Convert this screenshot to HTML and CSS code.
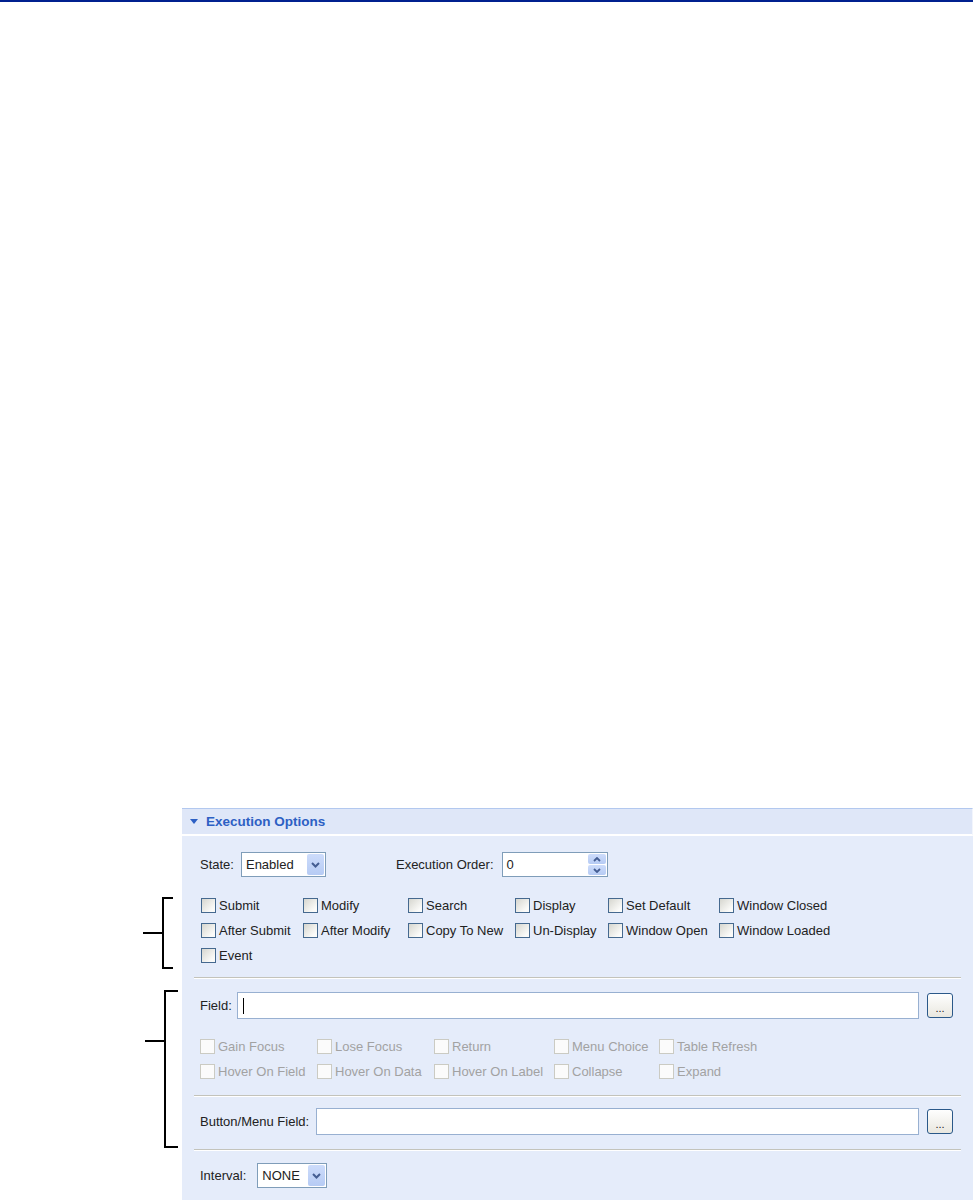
FILE: index.html
```html
<!DOCTYPE html>
<html lang="en">
<head>
    <meta charset="UTF-8">
    <title>Execution Options</title>
    <link rel="stylesheet" href="styles.css">
</head>
<body>
    <div class="topbar"></div>
    <div class="page">
        <div class="gutter"></div>
        <div class="panel-head"><span class="tri"></span>Execution Options</div>

        <div class="gutter"></div>
        <div class="sect state-row">
            <span class="lbl">State:</span>
            <div class="select w-state">
                <span class="val">Enabled</span>
                <span class="drop"><svg width="9" height="6" viewBox="0 0 9 6"><path d="M1 1 L4.5 4.5 L8 1" fill="none" stroke="#445d92" stroke-width="2"/></svg></span>
            </div>
            <span class="lbl order-lbl">Execution Order:</span>
            <div class="spinner">
                <span class="val">0</span>
                <span class="spin">
                    <span class="arrow"><svg width="8" height="5" viewBox="0 0 8 5"><path d="M1 4 L4 1 L7 4" fill="none" stroke="#445d92" stroke-width="1.8"/></svg></span>
                    <span class="arrow"><svg width="8" height="5" viewBox="0 0 8 5"><path d="M1 1 L4 4 L7 1" fill="none" stroke="#445d92" stroke-width="1.8"/></svg></span>
                </span>
            </div>
        </div>

        <div class="gutter"><div class="bracket b1"></div></div>
        <div class="sect events">
            <div class="checks">
                <label class="check"><span class="box"></span>Submit</label>
                <label class="check"><span class="box"></span>Modify</label>
                <label class="check"><span class="box"></span>Search</label>
                <label class="check"><span class="box"></span>Display</label>
                <label class="check"><span class="box"></span>Set Default</label>
                <label class="check"><span class="box"></span>Window Closed</label>
                <label class="check"><span class="box"></span>After Submit</label>
                <label class="check"><span class="box"></span>After Modify</label>
                <label class="check"><span class="box"></span>Copy To New</label>
                <label class="check"><span class="box"></span>Un-Display</label>
                <label class="check"><span class="box"></span>Window Open</label>
                <label class="check"><span class="box"></span>Window Loaded</label>
                <label class="check"><span class="box"></span>Event</label>
            </div>
            <div class="sep sep-events"></div>
        </div>

        <div class="gutter span2"><div class="bracket b2"></div></div>
        <div class="sect field-sect">
            <div class="field-row">
                <span class="lbl">Field:</span>
                <div class="input field-input"><span class="caret"></span></div>
                <button class="dots" type="button">...</button>
            </div>
            <div class="checks disabled">
                <label class="check"><span class="box"></span>Gain Focus</label>
                <label class="check"><span class="box"></span>Lose Focus</label>
                <label class="check"><span class="box"></span>Return</label>
                <label class="check"><span class="box"></span>Menu Choice</label>
                <label class="check"><span class="box"></span>Table Refresh</label>
                <label class="check"><span class="box"></span>Hover On Field</label>
                <label class="check"><span class="box"></span>Hover On Data</label>
                <label class="check"><span class="box"></span>Hover On Label</label>
                <label class="check"><span class="box"></span>Collapse</label>
                <label class="check"><span class="box"></span>Expand</label>
            </div>
            <div class="sep sep-field"></div>
        </div>
        <div class="sect button-sect">
            <div class="field-row">
                <span class="lbl">Button/Menu Field:</span>
                <div class="input"></div>
                <button class="dots" type="button">...</button>
            </div>
            <div class="sep sep-button"></div>
        </div>

        <div class="gutter"></div>
        <div class="sect interval-sect">
            <span class="lbl">Interval:</span>
            <div class="select w-interval">
                <span class="val">NONE</span>
                <span class="drop"><svg width="9" height="6" viewBox="0 0 9 6"><path d="M1 1 L4.5 4.5 L8 1" fill="none" stroke="#445d92" stroke-width="2"/></svg></span>
            </div>
        </div>
    </div>
</body>
</html>
```

FILE: styles.css
```css
body {
    margin: 0;
    font-family: "Liberation Sans", Arial, sans-serif;
    font-size: 13px;
    color: #222;
    background: #fff;
}
.topbar {
    height: 2px;
    background: #00208f;
}
.page {
    display: grid;
    grid-template-columns: 182px 791px;
    margin-top: 806px;
}
.gutter { grid-column: 1; }
.gutter.span2 { grid-row: span 2; }

/* panel header */
.panel-head {
    grid-column: 2;
    height: 25px;
    border-top: 1px solid #b2c8ef;
    border-bottom: 2px solid #fff;
    border-right: 1px solid #f2f5fc;
    background: #dfe7f8;
    display: flex;
    align-items: center;
    gap: 8px;
    padding-left: 8px;
    font-size: 13.5px;
    font-weight: bold;
    color: #2d60c4;
}
.tri {
    width: 0;
    height: 0;
    border-left: 4px solid transparent;
    border-right: 4px solid transparent;
    border-top: 5px solid #2d60c4;
}

.sect {
    grid-column: 2;
    background: #e5ecfa;
}
.lbl { white-space: nowrap; }

/* state row */
.state-row {
    display: flex;
    align-items: center;
    padding: 16px 0 16px 18px;
}
.state-row .select { margin-left: 7px; }
.order-lbl { margin-left: 70px; }
.select, .spinner {
    display: flex;
    align-items: center;
    height: 25px;
    box-sizing: border-box;
    border: 1px solid #7f9db9;
    background: #fff;
}
.select .val, .spinner .val {
    flex: 1;
    padding-left: 4px;
}
.w-state { width: 85px; }
.w-interval { width: 70px; }
.select .drop {
    align-self: stretch;
    width: 17px;
    margin: 1px;
    border-radius: 2px;
    background: linear-gradient(#cddcfb, #b6cbf4);
    display: flex;
    align-items: center;
    justify-content: center;
}
.spinner {
    width: 106px;
    margin-left: 8px;
}
.spin {
    align-self: stretch;
    width: 18px;
    margin: 1px;
    display: flex;
    flex-direction: column;
    gap: 1px;
}
.spin .arrow {
    flex: 1;
    border-radius: 2px;
    background: linear-gradient(#cddcfb, #b6cbf4);
    display: flex;
    align-items: center;
    justify-content: center;
}

/* check grids */
.checks {
    display: grid;
    grid-template-columns: 102px 105px 107px 93px 111px auto;
    grid-auto-rows: 25px;
    padding-left: 19px;
}
.check {
    display: flex;
    align-items: center;
    gap: 3px;
    white-space: nowrap;
}
.box {
    width: 15px;
    height: 15px;
    box-sizing: border-box;
    border: 1px solid #45698f;
    background: linear-gradient(135deg, #d6d6cf, #fbfbf9 80%);
}
.checks.disabled {
    grid-template-columns: 117px 117px 120px 105px auto;
    padding-left: 18px;
    margin-top: 15px;
    color: #a2a2a2;
}
.checks.disabled .box {
    border-color: #cbcbc3;
    background: #fbfbfb;
}

.sep {
    height: 1px;
    margin: 0 12px;
    background: #c3c3bb;
    border-bottom: 1px solid #fff;
}
.sep-events { margin-top: 9px; }
.sep-field { margin-top: 11px; }
.sep-button { margin-top: 14px; }

/* field rows */
.field-sect { padding-top: 13px; }
.button-sect { padding-top: 11px; }
.field-row {
    display: flex;
    align-items: center;
    padding: 0 20px 0 18px;
}
.input {
    flex: 1;
    height: 27px;
    box-sizing: border-box;
    margin: 0 8px 0 7px;
    border: 1px solid #98b0d1;
    background: #fff;
    display: flex;
    align-items: center;
    padding-left: 5px;
}
.field-input { margin-left: 5px; }
.caret {
    width: 1px;
    height: 16px;
    background: #000;
}
.dots {
    width: 26px;
    height: 25px;
    padding: 0 0 3px 0;
    border: 1px solid #2a5889;
    border-radius: 3px;
    background: linear-gradient(#fefefe, #e9e7df);
    font-family: "Liberation Sans", Arial, sans-serif;
    font-size: 11px;
    color: #222;
    display: flex;
    align-items: flex-end;
    justify-content: center;
}

/* interval */
.interval-sect {
    display: flex;
    align-items: center;
    padding: 12px 0 20px 18px;
}
.interval-sect .select { margin-left: 11px; }

/* side brackets */
.bracket {
    position: relative;
    box-sizing: border-box;
    border: 2px solid #000;
    border-right: none;
}
.bracket::after {
    content: "";
    position: absolute;
    height: 2px;
    background: #000;
}
.b1 {
    width: 11px;
    height: 72px;
    margin: 4px 0 0 162px;
}
.b1::after {
    left: -21px;
    width: 19px;
    top: 33px;
}
.b2 {
    width: 14px;
    height: 158px;
    margin: 11px 0 0 164px;
}
.b2::after {
    left: -21px;
    width: 19px;
    top: 48px;
}
```
